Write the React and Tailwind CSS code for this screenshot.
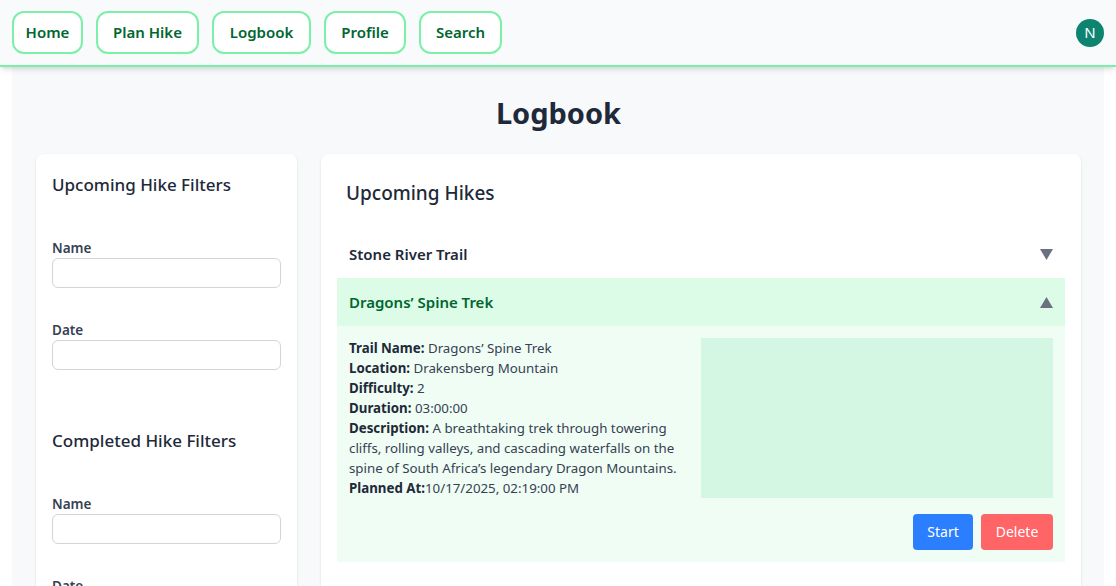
import React from "react";

function Tri({ up }) {
  return (
    <svg width="13" height="11" viewBox="0 0 13 11" className="text-gray-500">
      {up ? (
        <path d="M6.5 0 L13 11 L0 11 Z" fill="currentColor" />
      ) : (
        <path d="M0 0 L13 0 L6.5 11 Z" fill="currentColor" />
      )}
    </svg>
  );
}

function Field({ label, className = "" }) {
  return (
    <div className={"flex flex-col " + className}>
      <label className="text-[13.5px] leading-5 font-semibold text-gray-700">{label}</label>
      <input className="h-[30px] w-full rounded-md border border-gray-300 bg-white" />
    </div>
  );
}

export default function App() {
  const navs = [
    ["Home", "w-[71px]"],
    ["Plan Hike", "w-[103px]"],
    ["Logbook", "w-[99px]"],
    ["Profile", "w-[82px]"],
    ["Search", "w-[83px]"],
  ];
  return (
    <div className="min-h-[586px] bg-white text-gray-800" style={{ fontFamily: '"Noto Sans", "Open Sans", sans-serif' }}>
      <nav className="relative z-10 flex h-[67px] items-center justify-between border-b-2 border-green-300 bg-[#f8fafc] px-3 shadow-md">
        <div className="flex gap-[13px]">
          {navs.map(([n, w]) => (
            <button
              key={n}
              className={"h-[43px] rounded-xl border-2 border-green-300 bg-white text-center text-[15px] font-semibold text-green-800 " + w}
            >
              {n}
            </button>
          ))}
        </div>
        <div className="flex h-7 w-7 items-center justify-center rounded-full bg-[#0c8470] text-[15px] text-white">
          N
        </div>
      </nav>

      <main className="mx-3 bg-[#f8f9fb] pl-6 pr-[23px] pb-6">
        <h1 className="pt-[28px] text-center text-[29px] font-bold leading-9 text-gray-800">Logbook</h1>
        <div className="mt-[23px] flex gap-6">
          <aside className="w-[261px] shrink-0 rounded-lg bg-white px-4 pt-[17px] pb-6 shadow-sm">
            <h2 className="text-[17px] font-medium leading-7 text-gray-800">Upcoming Hike Filters</h2>
            <Field label="Name" className="mt-[39px]" />
            <Field label="Date" className="mt-[32px]" />
            <h2 className="mt-[57px] text-[17px] font-medium leading-7 text-gray-800">Completed Hike Filters</h2>
            <Field label="Name" className="mt-[39px]" />
            <Field label="Date" className="mt-[32px]" />
          </aside>

          <section className="flex-1 rounded-lg bg-white p-4 shadow-sm">
            <h2 className="px-[9px] pt-[9px] text-[19px] font-medium leading-7 text-gray-800">Upcoming Hikes</h2>
            <div className="mt-[23px]">
              <div className="flex h-12 items-center justify-between px-3">
                <span className="text-[15px] font-semibold text-gray-800">Stone River Trail</span>
                <Tri />
              </div>
              <div className="flex h-12 items-center justify-between bg-[#dcfce7] px-3">
                <span className="text-[15px] font-semibold text-green-800">Dragons’ Spine Trek</span>
                <Tri up />
              </div>
              <div className="bg-[#f0fdf4] px-3 pt-3 pb-3">
                <div className="flex gap-3">
                  <div className="flex-1 text-[13.3px] leading-5 text-gray-700">
                    <p><b className="font-bold text-gray-800">Trail Name:</b> Dragons’ Spine Trek</p>
                    <p><b className="font-bold text-gray-800">Location:</b> Drakensberg Mountain</p>
                    <p><b className="font-bold text-gray-800">Difficulty:</b> 2</p>
                    <p><b className="font-bold text-gray-800">Duration:</b> 03:00:00</p>
                    <p><b className="font-bold text-gray-800">Description:</b> A breathtaking trek through towering cliffs, rolling valleys, and cascading waterfalls on the spine of South Africa’s legendary Dragon Mountains.</p>
                    <p><b className="font-bold text-gray-800">Planned At:</b>10/17/2025, 02:19:00 PM</p>
                  </div>
                  <div className="h-[160px] w-[352px] shrink-0 bg-[#d3f7e3]" />
                </div>
                <div className="mt-4 flex justify-end gap-2">
                  <button className="h-9 w-[60px] rounded bg-blue-500 text-sm text-white">Start</button>
                  <button className="h-9 w-[72px] rounded bg-red-400 text-sm text-white">Delete</button>
                </div>
              </div>
            </div>
          </section>
        </div>
      </main>
    </div>
  );
}
